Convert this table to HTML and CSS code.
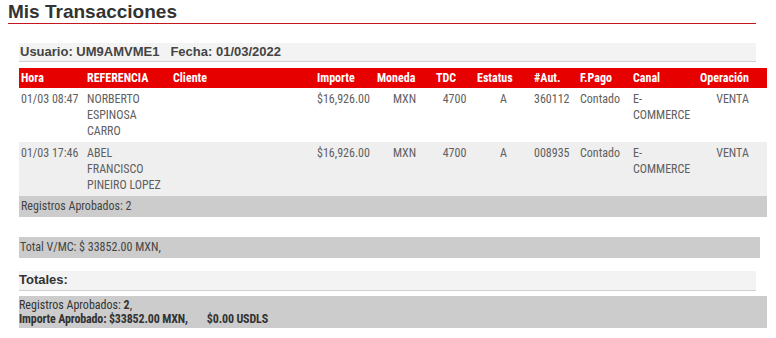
FILE: index.html
```html
<!DOCTYPE html>
<html lang="es">
<head>
<meta charset="utf-8">
<title>Mis Transacciones</title>
<link rel="stylesheet" href="styles.css">
</head>
<body>
<h1 class="page-title">Mis Transacciones</h1>
<section class="content">
  <div class="user-bar"><span>Usuario: UM9AMVME1</span><span class="fecha">Fecha: 01/03/2022</span></div>
  <table class="tx">
    <colgroup>
      <col class="c-hora"><col class="c-ref"><col class="c-cli"><col class="c-imp"><col class="c-mon"><col class="c-tdc"><col class="c-est"><col class="c-aut"><col class="c-pago"><col class="c-canal"><col class="c-op">
    </colgroup>
    <thead>
      <tr><th>Hora</th><th>REFERENCIA</th><th>Cliente</th><th>Importe</th><th>Moneda</th><th>TDC</th><th>Estatus</th><th>#Aut.</th><th>F.Pago</th><th>Canal</th><th>Operación</th></tr>
    </thead>
    <tbody>
      <tr><td>01/03 08:47</td><td>NORBERTO ESPINOSA CARRO</td><td></td><td>$16,926.00</td><td class="ctr">MXN</td><td class="ctr">4700</td><td class="ctr">A</td><td>360112</td><td>Contado</td><td>E-COMMERCE</td><td class="ctr">VENTA</td></tr>
      <tr class="alt"><td>01/03 17:46</td><td>ABEL FRANCISCO PINEIRO LOPEZ</td><td></td><td>$16,926.00</td><td class="ctr">MXN</td><td class="ctr">4700</td><td class="ctr">A</td><td>008935</td><td>Contado</td><td>E-COMMERCE</td><td class="ctr">VENTA</td></tr>
      <tr class="sum"><td colspan="11">Registros Aprobados: 2</td></tr>
    </tbody>
  </table>
  <div class="total-bar">Total V/MC: $ 33852.00 MXN,</div>
  <div class="totales-title">Totales:</div>
  <div class="totales-box">
    <div>Registros Aprobados: <b>2</b>,</div>
    <div class="strong">Importe Aprobado: $33852.00 MXN,<span class="usd">$0.00 USDLS</span></div>
  </div>
</section>
</body>
</html>
```
FILE: styles.css
```css
* { box-sizing: border-box; }
body {
  margin: 0;
  background: #fff;
  font-family: "Liberation Sans", Arial, sans-serif;
  color: #555;
}
.page-title {
  margin: 0 0 0 8px;
  width: 748px;
  padding-top: 1px;
  font-size: 19px;
  line-height: 22px;
  font-weight: bold;
  color: #333;
  border-bottom: 1px solid #c4161c;
}
.content {
  padding: 19px 0 0 19px;
}
.user-bar {
  width: 737px;
  height: 19px;
  background: #f3f3f3;
  border-bottom: 1px solid #d0d0d0;
  font-size: 13px;
  line-height: 18px;
  font-weight: bold;
  color: #444;
  padding-left: 1px;
}
.user-bar .fecha { margin-left: 11px; }
.tx {
  margin-top: 6px;
  width: 748px;
  table-layout: fixed;
  border-collapse: collapse;
  font-family: "Roboto Condensed", "DejaVu Sans Condensed", sans-serif;
  font-size: 12px;
}
.c-hora { width: 66px; }
.c-ref { width: 86px; }
.c-cli { width: 144px; }
.c-imp { width: 60px; }
.c-mon { width: 59px; }
.c-tdc { width: 41px; }
.c-est { width: 57px; }
.c-aut { width: 46px; }
.c-pago { width: 53px; }
.c-canal { width: 67px; }
.c-op { width: 69px; }
.tx th {
  background: #e60000;
  color: #fff;
  text-align: left;
  font-weight: bold;
  height: 20px;
  line-height: 20px;
  padding: 0 2px;
}
.tx td {
  vertical-align: top;
  padding: 3px 2px;
  line-height: 16px;
  color: #606060;
}
.tx td.ctr { text-align: center; }
.tx tr.alt td { background: #efefef; }
.tx tr.sum td {
  background: #cccccc;
  color: #444;
  padding: 2px 2px 3px;
}
.total-bar {
  margin-top: 20px;
  width: 741px;
  height: 21px;
  line-height: 21px;
  background: #cccccc;
  padding-left: 1px;
  font-family: "Roboto Condensed", "DejaVu Sans Condensed", sans-serif;
  font-size: 12px;
  color: #444;
}
.totales-title {
  margin-top: 13px;
  width: 737px;
  height: 20px;
  line-height: 18px;
  background: #f3f3f3;
  border-bottom: 1px solid #d0d0d0;
  font-size: 13px;
  font-weight: bold;
  color: #333;
}
.totales-box {
  margin-top: 5px;
  width: 748px;
  height: 32px;
  padding: 2px 0 2px 0;
  background: #cccccc;
  font-family: "Roboto Condensed", "DejaVu Sans Condensed", sans-serif;
  font-size: 12px;
  line-height: 14px;
  color: #333;
}
.totales-box .strong { font-weight: bold; letter-spacing: -0.15px; }
.totales-box .usd { margin-left: 19px; }
```
